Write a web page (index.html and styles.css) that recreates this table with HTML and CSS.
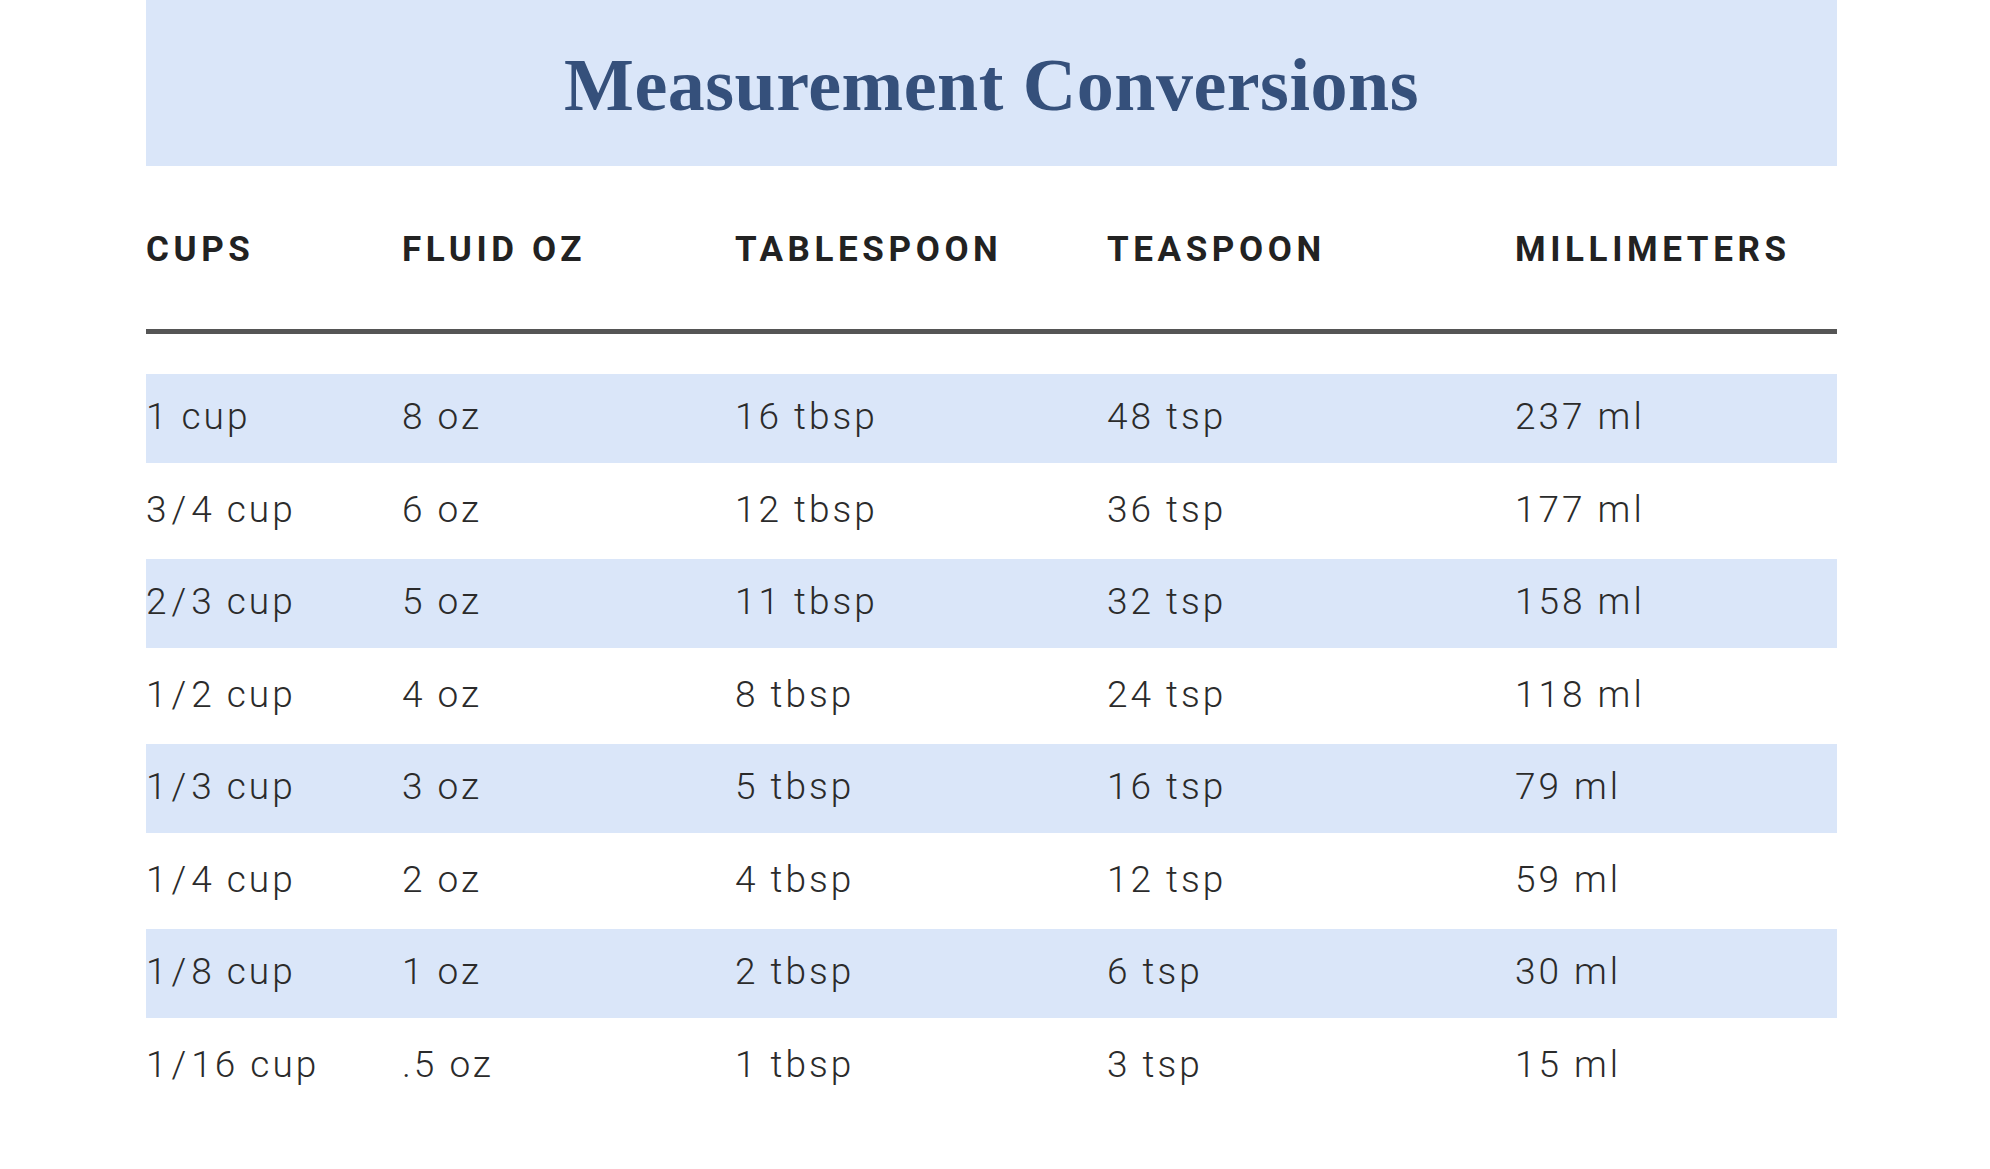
FILE: index.html
```html
<!DOCTYPE html>
<html lang="en">
<head>
<meta charset="utf-8">
<title>Measurement Conversions</title>
<link rel="stylesheet" href="styles.css">
</head>
<body>
<main class="page">
  <header class="title-bar">
    <h1 class="title">Measurement Conversions</h1>
  </header>
  <div class="table">
    <div class="row head">
      <div>CUPS</div><div>FLUID OZ</div><div>TABLESPOON</div><div>TEASPOON</div><div>MILLIMETERS</div>
    </div>
    <div class="body">
      <div class="row tint"><div>1 cup</div><div>8 oz</div><div>16 tbsp</div><div>48 tsp</div><div>237 ml</div></div>
      <div class="row"><div>3<span class="sl">/</span>4 cup</div><div>6 oz</div><div>12 tbsp</div><div>36 tsp</div><div>177 ml</div></div>
      <div class="row tint"><div>2<span class="sl">/</span>3 cup</div><div>5 oz</div><div>11 tbsp</div><div>32 tsp</div><div>158 ml</div></div>
      <div class="row"><div>1<span class="sl">/</span>2 cup</div><div>4 oz</div><div>8 tbsp</div><div>24 tsp</div><div>118 ml</div></div>
      <div class="row tint"><div>1<span class="sl">/</span>3 cup</div><div>3 oz</div><div>5 tbsp</div><div>16 tsp</div><div>79 ml</div></div>
      <div class="row"><div>1<span class="sl">/</span>4 cup</div><div>2 oz</div><div>4 tbsp</div><div>12 tsp</div><div>59 ml</div></div>
      <div class="row tint"><div>1<span class="sl">/</span>8 cup</div><div>1 oz</div><div>2 tbsp</div><div>6 tsp</div><div>30 ml</div></div>
      <div class="row"><div>1<span class="sl">/</span>16 cup</div><div>.5 oz</div><div>1 tbsp</div><div>3 tsp</div><div>15 ml</div></div>
    </div>
  </div>
</main>
</body>
</html>
```
FILE: styles.css
```css
html, body {
  margin: 0;
  padding: 0;
  background: #ffffff;
}

.page {
  width: 1691px;
  margin-left: 146px;
}

.title-bar {
  box-sizing: border-box;
  height: 166px;
  padding-top: 48px;
  background: #dae6f9;
  text-align: center;
}

.title {
  margin: 0;
  font-family: "Liberation Serif", serif;
  font-weight: 700;
  font-size: 74px;
  line-height: 74px;
  letter-spacing: 0.5px;
  color: #35507b;
}

.row {
  display: grid;
  grid-template-columns: 256px 333px 372px 408px 322px;
  align-items: center;
  font-family: Roboto, "Liberation Sans", sans-serif;
}

.head {
  box-sizing: border-box;
  height: 168px;
  padding-top: 66px;
  padding-bottom: 62px;
  border-bottom: 5px solid #555555;
  font-size: 35px;
  line-height: 35px;
  font-weight: 700;
  letter-spacing: 4.6px;
  color: #222222;
  align-items: start;
}

.body {
  margin-top: 40px;
}

.body .row {
  box-sizing: border-box;
  height: 96px;
  padding-bottom: 4px;
  font-size: 37px;
  font-weight: 300;
  letter-spacing: 3px;
  color: #2b2b2b;
}

.body .row.tint {
  height: 89px;
  background: #dae6f9;
}

.sl {
  margin: 0 2px;
}
```
